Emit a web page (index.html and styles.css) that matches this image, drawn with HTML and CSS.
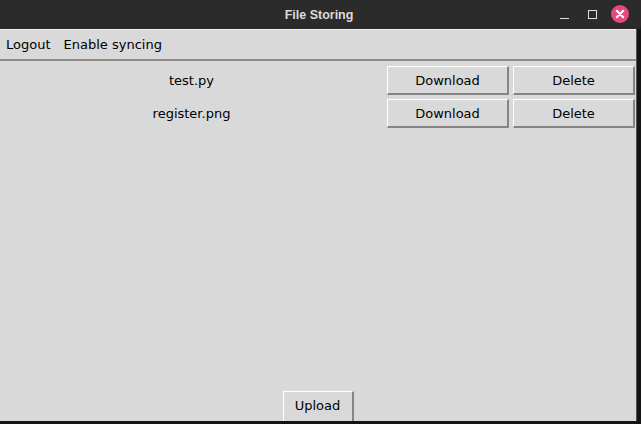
FILE: index.html
```html
<!DOCTYPE html>
<html>
<head>
<meta charset="utf-8">
<link rel="stylesheet" href="styles.css">
</head>
<body>
<div class="screen">
  <div class="titlebar">
    <span class="title">File Storing</span>
    <div class="controls">
      <span class="ctl-min"></span>
      <span class="ctl-max"></span>
      <span class="ctl-close">
        <svg width="18" height="18" viewBox="0 0 18 18"><circle cx="9" cy="9" r="9" fill="#e5487c"/><path d="M5.8 5.8 L12.2 12.2 M12.2 5.8 L5.8 12.2" stroke="#fff" stroke-width="2.2" stroke-linecap="round"/></svg>
      </span>
    </div>
  </div>
  <div class="window">
    <div class="menubar">
      <span class="menu-item">Logout</span>
      <span class="menu-item">Enable syncing</span>
    </div>
    <div class="content">
      <div class="files">
        <div class="file-name">test.py</div>
        <button class="btn">Download</button>
        <button class="btn">Delete</button>
        <div class="file-name">register.png</div>
        <button class="btn">Download</button>
        <button class="btn">Delete</button>
      </div>
      <div class="footer">
        <button class="btn btn-upload">Upload</button>
      </div>
    </div>
  </div>
</div>
</body>
</html>
```

FILE: styles.css
```css
* { box-sizing: border-box; }
html, body {
  margin: 0;
  padding: 0;
  width: 641px;
  height: 424px;
  overflow: hidden;
  background: #141414;
}
.screen {
  width: 641px;
  height: 424px;
  display: flex;
  flex-direction: column;
}
.titlebar {
  height: 29px;
  flex: none;
  background: #2b2b2b;
  position: relative;
  display: flex;
  align-items: center;
  justify-content: center;
}
.title {
  font-family: "Liberation Sans", sans-serif;
  font-weight: bold;
  font-size: 12.5px;
  color: #dcdcdc;
  margin-left: -3px;
}
.controls {
  position: absolute;
  right: 12px;
  top: 4px;
  display: flex;
  align-items: center;
  gap: 0;
  height: 20px;
}
.ctl-min {
  width: 9px;
  height: 1px;
  margin-top: 8px;
  background: #e0e0e0;
  margin-right: 19px;
}
.ctl-max {
  width: 9px;
  height: 9px;
  border: 1px solid #e0e0e0;
  margin-right: 14px;
}
.ctl-close { display: flex; }
.window {
  width: 637px;
  height: 392px;
  background: #d9d9d9;
  display: flex;
  flex-direction: column;
  font-family: "DejaVu Sans", sans-serif;
  font-size: 13px;
  color: #000;
  border-right: 1px solid #555;
}
.menubar {
  height: 32px;
  flex: none;
  display: flex;
  align-items: center;
  padding-left: 6px;
  gap: 13px;
  border-bottom: 2px solid #8c8c8c;
  border-top: 1px solid #f0f0f0;
}
.content {
  flex: 1;
  display: flex;
  flex-direction: column;
  justify-content: space-between;
}
.files {
  display: grid;
  grid-template-columns: 383px 122px 122px;
  column-gap: 4px;
  row-gap: 4px;
  grid-auto-rows: 29px;
  padding-top: 5px;
}
.file-name {
  display: flex;
  align-items: center;
  justify-content: center;
}
.btn {
  font-family: "DejaVu Sans", sans-serif;
  font-size: 13px;
  color: #000;
  background: #d9d9d9;
  border: 1px solid;
  border-color: #ffffff #858585 #858585 #ffffff;
  border-width: 1px 2px 2px 1px;
  padding: 0;
  margin: 0;
}
.footer {
  display: flex;
  justify-content: center;
}
.btn-upload {
  width: 71px;
  height: 30px;
  border-bottom: none;
  padding-bottom: 3px;
}
```
